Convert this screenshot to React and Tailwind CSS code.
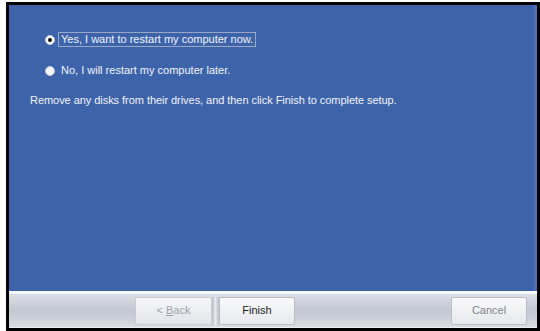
export default function App() {
  return (
    <div className="w-[540px] h-[331px] bg-white pl-[6px] pt-[2px] overflow-hidden" style={{ fontFamily: '"Liberation Sans", Arial, sans-serif' }}>
      <div className="w-[534px] h-[329px] border-[3px] border-black flex flex-col">
        <div className="flex-1 bg-[#3d63aa] border-r-[3px] border-r-[#5173b4] pl-[21px] pt-[27px] text-[11px] text-[#f2f4f8]">
          <div className="flex items-center h-[15px] pl-[15px]">
            <span className="w-[10px] h-[10px] rounded-full bg-white border border-[#c8cfdc] flex items-center justify-center">
              <span className="w-[4px] h-[4px] rounded-full bg-black" />
            </span>
            <span className="ml-[3px] px-[2px] border border-[#9aa8c4] leading-[13px]">Yes, I want to restart my computer now.</span>
          </div>
          <div className="flex items-center h-[15px] pl-[15px] mt-[16px]">
            <span className="w-[10px] h-[10px] rounded-full bg-[#f4f4f4] border border-[#c8cfdc]" />
            <span className="ml-[6px]">No, I will restart my computer later.</span>
          </div>
          <div className="mt-[15px] h-[15px] flex items-center tracking-[-0.05px]">
            Remove any disks from their drives, and then click Finish to complete setup.
          </div>
        </div>
        <div className="h-[3px] bg-[#f4f6f9]" />
        <div className="h-[34px] bg-gradient-to-b from-[#dcdfe6] via-[#c3c7d1] to-[#d8dbe2] border-b border-b-[#eef0f3] flex items-center text-[11px]">
          <div className="ml-[126px] w-[77px] h-[28px] flex items-center justify-center bg-gradient-to-b from-[#f7f7f9] to-[#e3e5ea] border border-[#c9ccd3] rounded-[2px] text-[#9aa0ab]">
            &lt; <span className="underline ml-[3px]">B</span>ack
          </div>
          <div className="w-[7px] h-[28px] bg-gradient-to-r from-[#b9bdc6] via-[#e8eaee] to-[#b9bdc6]" />
          <div className="w-[76px] h-[28px] flex items-center justify-center bg-gradient-to-b from-[#fafafb] to-[#e6e8ec] border border-[#b9bdc6] rounded-[2px] text-[#1a1a1a]">
            Finish
          </div>
          <div className="ml-auto mr-[10px] w-[76px] h-[28px] flex items-center justify-center bg-gradient-to-b from-[#fafafb] to-[#e6e8ec] border border-[#b9bdc6] rounded-[2px] text-[#7d838e]">
            Cancel
          </div>
        </div>
      </div>
    </div>
  );
}
